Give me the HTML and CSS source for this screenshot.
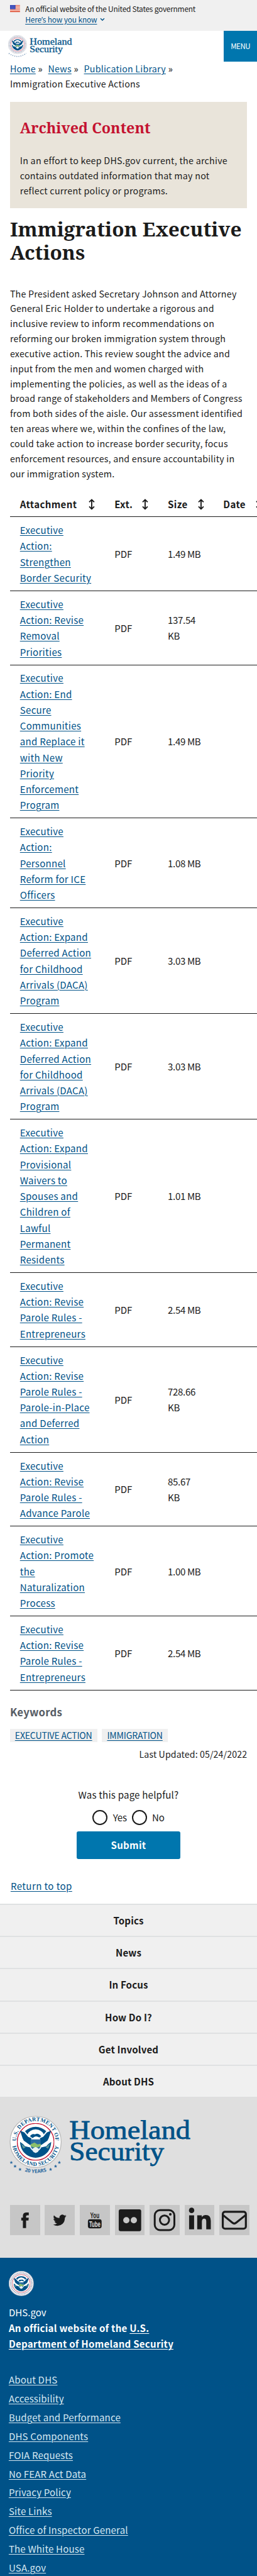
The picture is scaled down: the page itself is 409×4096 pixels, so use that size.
FILE: index.html
```html
<!DOCTYPE html>
<html lang="en">
<head>
<meta charset="utf-8">
<title>Immigration Executive Actions | Homeland Security</title>
<link rel="stylesheet" href="styles.css">
</head>
<body>
<svg class="defs" width="0" height="0" aria-hidden="true">
  <symbol id="eagle" viewBox="-30 -30 60 60">
    <circle r="29.5" fill="#fff" stroke="#c41230" stroke-width="1.4"/>
    <path d="M-17-17A24 24 0 0 1 17-17L13-12Q10-19 0-20Q-10-19-13-12Z" fill="#005288"/>
    <path d="M-25-18L-18-15-12-8-7-6-7-1-3 2-9 5-19-2-21-6Z" fill="#005288"/>
    <path d="M25-18L18-15 12-8 7-6 7-1 3 2 9 5 19-2 21-6Z" fill="#005288"/>
    <path d="M-9-9Q-6-14-1-12Q4-15 9-9L6-7Q1-10-2-8L-5-6Z" fill="#005288"/>
    <path d="M-8-4H8V6Q7 12 0 15Q-7 12-8 6Z" fill="#2d6ea3"/>
    <path d="M-8 4L-2 1 3 4 8 3V7L0 10-8 7Z" fill="#8cbf6a"/>
    <path d="M-25 0Q-20 3-17 7L-9 9Q-7 14 0 17Q7 14 9 9L17 7Q20 3 25 0Q24 18 8 24Q0 27-8 24Q-24 18-25 0Z" fill="#005288"/>
    <path d="M-23 3L-16 9-20 11ZM23 3L16 9 20 11Z" fill="#5d9a9a"/>
    <path d="M-5 11L0 8 5 11 4 16 0 18-4 16Z" fill="#e8f1f5"/>
  </symbol>
  <symbol id="seal-small" viewBox="-41 -41 82 82">
    <circle r="40.5" fill="#f4f4f6" stroke="#b9bcc8" stroke-width="1.5"/>
    <circle r="34.5" fill="none" stroke="#8a92ad" stroke-width="5" stroke-dasharray="1.8 3"/>
    <use href="#eagle" x="-30" y="-30" width="60" height="60"/>
  </symbol>
  <symbol id="sort" viewBox="0 0 12 18">
    <path d="M6 2V16M2 5.5L6 1.5 10 5.5M2 12.5L6 16.5 10 12.5" fill="none" stroke="#1b1b1b" stroke-width="1.9"/>
  </symbol>
</svg>

<div class="banner">
  <svg class="flag" viewBox="0 0 16 11">
    <rect width="16" height="11" fill="#fff"/>
    <path d="M0 .6H16M0 2.8H16M0 5H16M0 7.2H16M0 9.4H16M0 10.8H16" stroke="#db3e1f" stroke-width="1"/>
    <rect width="8.6" height="6.6" fill="#1e33b1"/>
    <path d="M1 1.3H8M1 3.2H8M1 5.1H8" stroke="#fff" stroke-width=".7" stroke-dasharray=".8 1"/>
  </svg>
  <div>
    <p class="banner-text">An official website of the United States government</p>
    <p class="banner-know"><a href="#">Here<span class="apos">’</span>s how you know</a><svg class="caret" viewBox="0 0 8 6"><path d="M1 1.2L4 4.2 7 1.2" fill="none" stroke="#005288" stroke-width="1.4"/></svg></p>
  </div>
</div>

<header class="header">
  <svg class="logo" viewBox="0 0 110 44">
    <use href="#seal-small" x="1" y="2" width="30" height="30"/>
    <path d="M2 31Q16 41 30 31" fill="none" stroke="#8fa9c4" stroke-width="1.6" stroke-dasharray="1.5 1.8"/>
    <text class="serif" x="35.5" y="17.5" font-size="15" textLength="68" lengthAdjust="spacingAndGlyphs">Homeland</text>
    <text class="serif" x="35.5" y="29.7" font-size="15" textLength="53" lengthAdjust="spacingAndGlyphs">Security</text>
  </svg>
  <button class="menu">MENU</button>
</header>

<nav class="crumbs">
  <p><a href="#">Home</a><i>»</i><a href="#">News</a><i>»</i><a href="#">Publication Library</a><i>»</i></p>
  <p>Immigration Executive Actions</p>
</nav>

<section class="archived">
  <h2>Archived Content</h2>
  <p>In an effort to keep DHS.gov current, the archive<br>contains outdated information that may not<br>reflect current policy or programs.</p>
</section>

<h1>Immigration Executive<br>Actions</h1>

<p class="intro">The President asked Secretary Johnson and Attorney<br>General Eric Holder to undertake a rigorous and<br>inclusive review to inform recommendations on<br>reforming our broken immigration system through<br>executive action. This review sought the advice and<br>input from the men and women charged with<br>implementing the policies, as well as the ideas of a<br>broad range of stakeholders and Members of Congress<br>from both sides of the aisle. Our assessment identified<br>ten areas where we, within the confines of the law,<br>could take action to increase border security, focus<br>enforcement resources, and ensure accountability in<br>our immigration system.</p>

<div class="table-wrap">
<table>
  <colgroup><col class="c1"><col class="c2"><col class="c3"><col class="c4"></colgroup>
  <thead><tr>
    <th><div>Attachment<svg><use href="#sort"/></svg></div></th>
    <th><div>Ext.<svg><use href="#sort"/></svg></div></th>
    <th><div>Size<svg><use href="#sort"/></svg></div></th>
    <th><div>Date<svg><use href="#sort"/></svg></div></th>
  </tr></thead>
  <tbody>
    <tr><td><a href="#">Executive<br>Action:<br>Strengthen<br>Border Security</a></td><td>PDF</td><td>1.49 MB</td><td></td></tr>
    <tr><td><a href="#">Executive<br>Action: Revise<br>Removal<br>Priorities</a></td><td>PDF</td><td>137.54<br>KB</td><td></td></tr>
    <tr><td><a href="#">Executive<br>Action: End<br>Secure<br>Communities<br>and Replace it<br>with New<br>Priority<br>Enforcement<br>Program</a></td><td>PDF</td><td>1.49 MB</td><td></td></tr>
    <tr><td><a href="#">Executive<br>Action:<br>Personnel<br>Reform for ICE<br>Officers</a></td><td>PDF</td><td>1.08 MB</td><td></td></tr>
    <tr><td><a href="#">Executive<br>Action: Expand<br>Deferred Action<br>for Childhood<br>Arrivals (DACA)<br>Program</a></td><td>PDF</td><td>3.03 MB</td><td></td></tr>
    <tr><td><a href="#">Executive<br>Action: Expand<br>Deferred Action<br>for Childhood<br>Arrivals (DACA)<br>Program</a></td><td>PDF</td><td>3.03 MB</td><td></td></tr>
    <tr><td><a href="#">Executive<br>Action: Expand<br>Provisional<br>Waivers to<br>Spouses and<br>Children of<br>Lawful<br>Permanent<br>Residents</a></td><td>PDF</td><td>1.01 MB</td><td></td></tr>
    <tr><td><a href="#">Executive<br>Action: Revise<br>Parole Rules -<br>Entrepreneurs</a></td><td>PDF</td><td>2.54 MB</td><td></td></tr>
    <tr><td><a href="#">Executive<br>Action: Revise<br>Parole Rules -<br>Parole-in-Place<br>and Deferred<br>Action</a></td><td>PDF</td><td>728.66<br>KB</td><td></td></tr>
    <tr><td><a href="#">Executive<br>Action: Revise<br>Parole Rules -<br>Advance Parole</a></td><td>PDF</td><td>85.67<br>KB</td><td></td></tr>
    <tr><td><a href="#">Executive<br>Action: Promote<br>the<br>Naturalization<br>Process</a></td><td>PDF</td><td>1.00 MB</td><td></td></tr>
    <tr><td><a href="#">Executive<br>Action: Revise<br>Parole Rules -<br>Entrepreneurs</a></td><td>PDF</td><td>2.54 MB</td><td></td></tr>
  </tbody>
</table>
</div>

<section class="keywords">
  <h3>Keywords</h3>
  <div class="tags"><span><a href="#">EXECUTIVE ACTION</a></span><span><a href="#">IMMIGRATION</a></span></div>
</section>
<p class="updated">Last Updated: 05/24/2022</p>

<form class="helpful">
  <p>Was this page helpful?</p>
  <div class="radios"><i></i><label class="yes">Yes</label><i></i><label>No</label></div>
  <button type="button">Submit</button>
</form>

<p class="return"><a href="#">Return to top</a></p>

<nav class="foot-nav">
  <a>Topics</a><a>News</a><a>In Focus</a><a>How Do I?</a><a>Get Involved</a><a>About DHS</a>
</nav>

<section class="foot-brand">
  <svg class="brand" viewBox="0 0 310 104">
    <circle cx="41" cy="42" r="41" fill="#fff" stroke="#b5b5b5" stroke-width="1.2"/>
    <use href="#eagle" x="11" y="12" width="60" height="60"/>
    <path id="arc-top" d="M10.7 47.4A31.4 31.4 0 1 1 71.7 47.4" fill="none"/>
    <path id="arc-bot" d="M3.4 43A37.6 37.6 0 0 0 78.6 43" fill="none"/>
    <path id="arc-years" d="M4 79Q41 105 78 79" fill="none"/>
    <text class="ring"><textPath href="#arc-top" startOffset="50%" text-anchor="middle">U.S. DEPARTMENT OF</textPath></text>
    <text class="ring"><textPath href="#arc-bot" startOffset="50%" text-anchor="middle">HOMELAND SECURITY</textPath></text>
    <text class="years"><textPath href="#arc-years" startOffset="50%" text-anchor="middle">20 YEARS</textPath></text>
    <g fill="#2b6aa0">
      <path id="star" d="M0-2.6L.8-.8 2.6-.7 1.2.5 1.7 2.3 0 1.3-1.7 2.3-1.2.5-2.6-.7-.8-.8Z" transform="translate(2 75)"/>
      <use href="#star" x="6" y="6"/><use href="#star" x="14" y="11"/>
      <use href="#star" x="63" y="11"/><use href="#star" x="71" y="6"/><use href="#star" x="77" y="0"/>
    </g>
    <text class="serif heavy" x="95" y="37" font-size="43.5" textLength="194" lengthAdjust="spacingAndGlyphs">Homeland</text>
    <text class="serif heavy" x="95" y="72" font-size="43.5" textLength="152" lengthAdjust="spacingAndGlyphs">Security</text>
  </svg>
  <div class="social">
    <a><svg viewBox="0 0 48 48"><path d="M20.6 37V25H18v-4.500h2.600V17.500q0-5 5-5.500h4.400v4.500h-2.700q-1.600 0-1.600 1.700v2.300H30L29.500 25h-3.800V37z"/></svg></a>
    <a><svg viewBox="0 0 48 48"><path d="M35 17.500q-1.200.6-2.500.7 1.400-.9 1.900-2.300-1.300.8-2.800 1.100a4.500 4.500 0 0 0-7.700 4Q18.500 20.700 15 16.500q-1.800 3.600 1.300 6-1 0-2-.6 0 3.400 3.600 4.400-1 .3-2 .1 1 3 4.100 3.100-2.700 2.200-6.500 1.900 8.500 4.800 15.300-1.200 3.800-3.900 3.700-9.900 1.500-1.100 2.500-2.800z"/></svg></a>
    <a><svg viewBox="0 0 48 48"><rect x="13" y="23" width="22" height="14.500" rx="3.500"/><text class="yt" x="24" y="21" textLength="14.500" lengthAdjust="spacingAndGlyphs">You</text><text class="yt light" x="24" y="35.200" textLength="18" lengthAdjust="spacingAndGlyphs">Tube</text></svg></a>
    <a><svg viewBox="0 0 48 48"><rect x="6" y="7" width="36" height="35" rx="3"/><circle cx="18.200" cy="24.500" r="5" fill="#c6c6c6"/><circle cx="30.200" cy="24.500" r="5" fill="#c6c6c6"/></svg></a>
    <a><svg viewBox="0 0 48 48"><g fill="none" stroke="#1b1b1b"><rect x="8.300" y="8.300" width="31.500" height="32" rx="8.500" stroke-width="3"/><circle cx="24" cy="24.300" r="7.400" stroke-width="3"/></g><circle cx="33.300" cy="15" r="2.100"/></svg></a>
    <a><svg viewBox="0 0 48 48"><circle cx="11" cy="8.700" r="4.300"/><path d="M7 16.500h8V39H7zM20 16.500h7.300v3q2.500-3.500 6.500-3.500 8 0 8 9.500V39h-7.300V26.500q0-4.500-3.300-4.500-3.700 0-3.700 5V39H20z"/></svg></a>
    <a><svg viewBox="0 0 48 48"><g fill="none" stroke="#1b1b1b" stroke-width="3.200"><rect x="5.600" y="11" width="37" height="27" rx="3.500"/><path d="M5.600 16L21 28.500Q24 31 27 28.500L42.600 16"/></g></svg></a>
  </div>
</section>

<footer class="gov">
  <svg class="gov-seal"><use href="#seal-small"/></svg>
  <p>DHS.gov</p>
  <p class="official">An official website of the <a href="#">U.S.<br>Department of Homeland Security</a></p>
  <ul>
    <li><a href="#">About DHS</a></li><li><a href="#">Accessibility</a></li><li><a href="#">Budget and Performance</a></li><li><a href="#">DHS Components</a></li><li><a href="#">FOIA Requests</a></li><li><a href="#">No FEAR Act Data</a></li><li><a href="#">Privacy Policy</a></li><li><a href="#">Site Links</a></li><li><a href="#">Office of Inspector General</a></li><li><a href="#">The White House</a></li><li><a href="#">USA.gov</a></li>
  </ul>
</footer>
</body>
</html>
```
FILE: styles.css
```css
* { box-sizing: border-box; margin: 0; padding: 0; }
html { overflow: hidden; }
body {
  zoom: 0.99272;
  width: 412px;
  height: 4126px;
  overflow: hidden;
  background: #fff;
  color: #1b1b1b;
  font-family: "Noto Sans CJK SC", "Open Sans", sans-serif;
  font-size: 15.2px;
  white-space: nowrap;
}
.defs { display: block; position: absolute; }
a { color: #005288; text-underline-offset: 2px; text-decoration-thickness: 1px; }
i { font-style: normal; }
svg { display: block; overflow: visible; }
button { border: 0; background: #0076ae; color: #fff; font-family: inherit; }
.serif { font-family: "Liberation Serif", serif; fill: #005288; stroke: #005288; stroke-width: 0.3; }
.heavy { stroke-width: 0.8; }

.banner { height: 49px; padding: 6.5px 0 0 16.5px; background: #f0f0f0; display: flex; gap: 8px; font-size: 12px; line-height: 16.3px; letter-spacing: -0.23px; }
.flag { width: 16px; height: 11px; margin-top: 1.5px; }
.banner-know { display: flex; align-items: center; gap: 5px; letter-spacing: -0.15px; }
.apos { font-family: "Open Sans", sans-serif; }
.caret { width: 8px; height: 6px; }

.header { height: 50px; display: flex; justify-content: space-between; }
.logo { width: 110px; height: 44px; margin: 5px 0 0 12px; }
.menu { width: 53px; height: 50px; font-size: 11.6px; letter-spacing: -0.4px; }

.crumbs { height: 64px; padding-left: 16px; font-size: 14.3px; line-height: 24px; letter-spacing: 0.25px; }
.crumbs i { margin: 0 9px 0 4px; font: 14px/20px "Open Sans", sans-serif; letter-spacing: 0; }

.archived { width: 380px; height: 170px; margin-left: 16px; padding: 27px 16px 0; background: #e9e4da; font-size: 14.4px; line-height: 24px; letter-spacing: 0.25px; }
.archived h2 { height: 55px; font: 700 23.5px/30px "Noto Serif", serif; letter-spacing: 0; color: #c41230; }

h1 { margin: 14.300px 0 0 16px; height: 110.700px; font: 700 31.8px/38px "Noto Serif", serif; }
.intro { padding-left: 16px; height: 329.500px; font-size: 14.35px; line-height: 24px; letter-spacing: 0.22px; }

.table-wrap { margin-left: 16px; width: 396px; height: 1923px; overflow: hidden; }
table { width: 419px; table-layout: fixed; border-collapse: separate; border-spacing: 0; line-height: 25.42px; }
.c1 { width: 151.5px; }
.c2 { width: 85.5px; }
.c3 { width: 89px; }
.c4 { width: 93px; }
th, td { border-bottom: 1px solid #1b1b1b; text-align: left; vertical-align: middle; padding: 7.900px 0 7.900px 16px; }
th { height: 41px; padding: 0 14px 0 16px; letter-spacing: 0.35px; }
th div { display: flex; justify-content: space-between; align-items: center; }
th svg { width: 12px; height: 18px; }
td a { letter-spacing: 0.27px; }
td:nth-child(3) { letter-spacing: -0.35px; }

.keywords { padding: 19.500px 0 0 16px; height: 85px; }
h3 { font-size: 16.9px; line-height: 26px; letter-spacing: 0.2px; color: #565c65; }
.tags { display: flex; gap: 8px; margin-top: 13px; font-size: 14.2px; line-height: 21px; letter-spacing: -0.2px; }
.tags span { background: #f0f0f0; padding: 0 8px; }
.updated { padding-right: 16px; text-align: right; font-size: 14.3px; line-height: 24px; margin-top: 3px; letter-spacing: 0.1px; }

.helpful { padding-top: 40px; height: 155px; display: flex; flex-direction: column; align-items: center; line-height: 25px; letter-spacing: 0.2px; }
.radios { display: flex; align-items: center; height: 24px; margin: 12px 0 10px; }
.radios i { width: 24px; height: 24px; border: 2.1px solid #1b1b1b; border-radius: 50%; margin-right: 8.5px; }
.radios label { letter-spacing: -0.2px; }
.radios .yes { margin-right: 8px; }
.helpful button { width: 166px; height: 44px; border-radius: 3px; font-size: 15.2px; font-weight: 700; letter-spacing: 0.3px; flex: none; }
.return { padding: 31px 0 0 17px; height: 71.500px; line-height: 25px; letter-spacing: 0.4px; }

.foot-nav { height: 310px; display: grid; grid-template-rows: repeat(6, 1fr); background: #f0f0f0; }
.foot-nav a { display: flex; align-items: center; justify-content: center; border-top: 2.1px solid #dfe1e2; font-weight: 700; color: #1b1b1b; letter-spacing: 0.15px; }

.foot-brand { height: 257px; padding: 30px 0 0 16px; background: #dfdfdf; }
.brand { width: 310px; height: 104px; }
.ring { font: 600 8.8px "Liberation Serif", serif; fill: #005288; letter-spacing: 0.35px; }
.years { font: 700 8px "Open Sans", sans-serif; fill: #2b6aa0; }
.social { display: flex; gap: 8px; margin-top: 39px; }
.social a { width: 48px; height: 48px; background: #c6c6c6; }
.social svg { width: 48px; height: 48px; fill: #1b1b1b; }
.yt { font: 700 13px "Liberation Sans", sans-serif; text-anchor: middle; }
.light { fill: #dedede; }

.gov { height: 510px; padding: 22px 0 0 14px; background: #005288; color: #fff; line-height: 25.5px; }
.gov a { color: #d5e6f0; }
.gov .official a { color: #fff; }
.gov-seal { width: 40px; height: 40px; margin-bottom: 12.500px; }
.gov .official { font-weight: 700; letter-spacing: 0.25px; }
.gov ul { list-style: none; margin-top: 30px; line-height: 30.1px; letter-spacing: 0.15px; }
```
